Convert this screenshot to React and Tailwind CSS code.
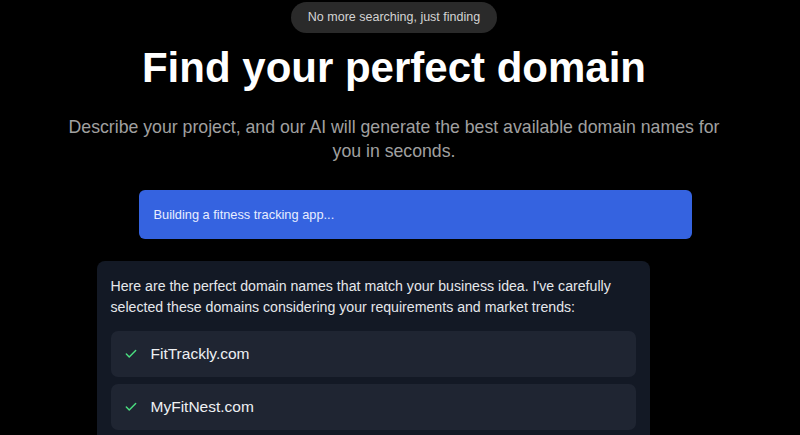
import React from "react";

const Check = () => (
  <svg width="14" height="14" viewBox="0 0 24 24" fill="none" stroke="#4ade80" strokeWidth="2.5" strokeLinecap="round" strokeLinejoin="round">
    <path d="M20 6 9 17l-5-5" />
  </svg>
);

export default function App() {
  const font = { fontFamily: '"Liberation Sans", Arial, sans-serif' };
  return (
    <div className="w-[800px] h-[435px] bg-black overflow-hidden pr-[12px]" style={font}>
      <div className="flex flex-col items-center">
        <div className="mt-[2px] h-[31px] px-[17px] rounded-full bg-[#2a2a2a] flex items-center text-[12.5px] text-[#d4d4d4]">
          No more searching, just finding
        </div>
        <h1 className="mt-[10px] text-[42px] leading-[50px] font-bold text-white">Find your perfect domain</h1>
        <p className="mt-[22px] w-[680px] text-center text-[17.7px] leading-[24px] text-[#a0a0a0]">
          Describe your project, and our AI will generate the best available domain names for you in seconds.
        </p>
        <div className="mt-[27px] w-[595px] flex flex-col">
          <div className="self-end w-[553px] h-[49px] rounded-[6px] bg-[#3563e0] flex items-center px-[15px] text-[12.8px] text-[#e8eeff]">
            Building a fitness tracking app...
          </div>
          <div className="mt-[22px] w-[553px] h-[200px] rounded-[8px] bg-[#131925] pt-[15px] px-[14px]">
            <p className="text-[14.15px] leading-[21px] text-[#e5e7eb] whitespace-nowrap">
              <span className="block">Here are the perfect domain names that match your business idea. I've carefully</span>
              <span className="block">selected these domains considering your requirements and market trends:</span>
            </p>
            <div className="mt-[13px] flex flex-col gap-[7px]">
              {["FitTrackly.com", "MyFitNest.com"].map((d) => (
                <div key={d} className="h-[46px] rounded-[7px] bg-[#1f2532] flex items-center pl-[13px] gap-[13px]">
                  <Check />
                  <span className="text-[15.5px] text-[#eef0f3]">{d}</span>
                </div>
              ))}
            </div>
          </div>
        </div>
      </div>
    </div>
  );
}
